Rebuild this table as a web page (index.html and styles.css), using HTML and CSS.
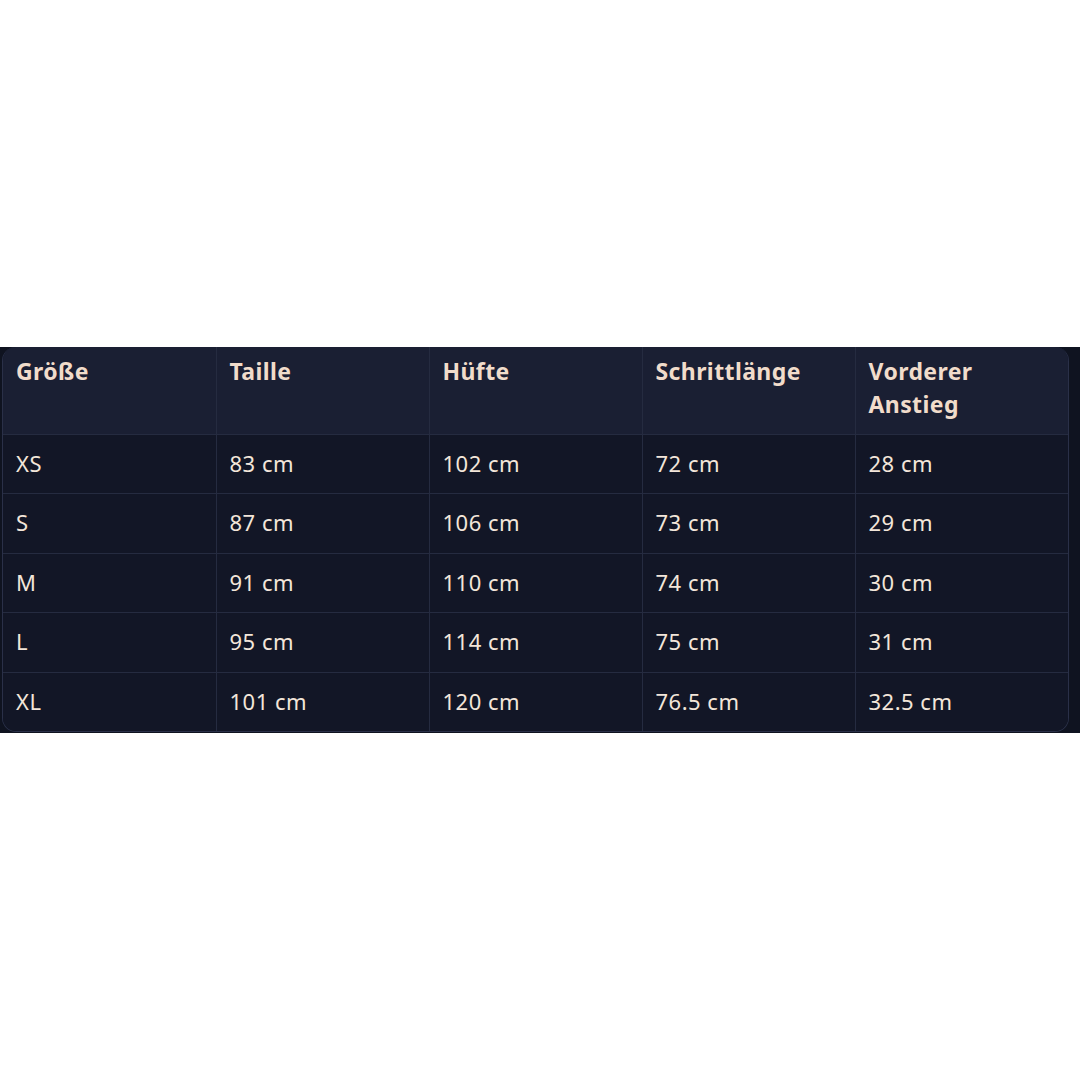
FILE: index.html
```html
<!DOCTYPE html>
<html lang="de">
<head>
<meta charset="utf-8">
<link rel="stylesheet" href="styles.css">
</head>
<body>
<div class="page">
  <div class="band">
    <div class="card">
      <table class="sizes">
        <thead>
          <tr><th>Größe</th><th>Taille</th><th>Hüfte</th><th>Schrittlänge</th><th>Vorderer<br>Anstieg</th></tr>
        </thead>
        <tbody>
          <tr><td>XS</td><td>83 cm</td><td>102 cm</td><td>72 cm</td><td>28 cm</td></tr>
          <tr><td>S</td><td>87 cm</td><td>106 cm</td><td>73 cm</td><td>29 cm</td></tr>
          <tr><td>M</td><td>91 cm</td><td>110 cm</td><td>74 cm</td><td>30 cm</td></tr>
          <tr><td>L</td><td>95 cm</td><td>114 cm</td><td>75 cm</td><td>31 cm</td></tr>
          <tr><td>XL</td><td>101 cm</td><td>120 cm</td><td>76.5 cm</td><td>32.5 cm</td></tr>
        </tbody>
      </table>
    </div>
  </div>
</div>
</body>
</html>
```

FILE: styles.css
```css
html, body {
  margin: 0;
  padding: 0;
  background: #ffffff;
}
.page {
  width: 1080px;
  height: 1080px;
  display: flex;
  flex-direction: column;
  padding-top: 347px;
  box-sizing: border-box;
}
.band {
  background: #0f1320;
  height: 386px;
  padding: 0 11px 0 2px;
}
.card {
  border: 1px solid #2a3048;
  border-top: none;
  border-radius: 14px;
  overflow: hidden;
  background: #121626;
}
.sizes {
  width: 100%;
  border-collapse: collapse;
  table-layout: fixed;
  font-family: "Noto Sans", "Open Sans", sans-serif;
  font-size: 22px;
  letter-spacing: 0.5px;
  color: #f3e6da;
}
.sizes th, .sizes td {
  text-align: left;
  vertical-align: top;
  padding: 12px 13px 14.4px;
  line-height: 32px;
  border-right: 1px solid #252b40;
  border-bottom: 1px solid #252b40;
}
.sizes th:last-child, .sizes td:last-child {
  border-right: none;
}
.sizes tbody tr:last-child td {
  border-bottom: none;
}
.sizes thead th {
  background: #1a1f33;
  font-weight: 700;
  font-size: 23px;
  letter-spacing: 0.4px;
  padding: 8px 13px 13px;
  line-height: 33px;
  color: #f1dccb;
}
.sizes tbody td {
  background: #121626;
  font-weight: 400;
}
```
